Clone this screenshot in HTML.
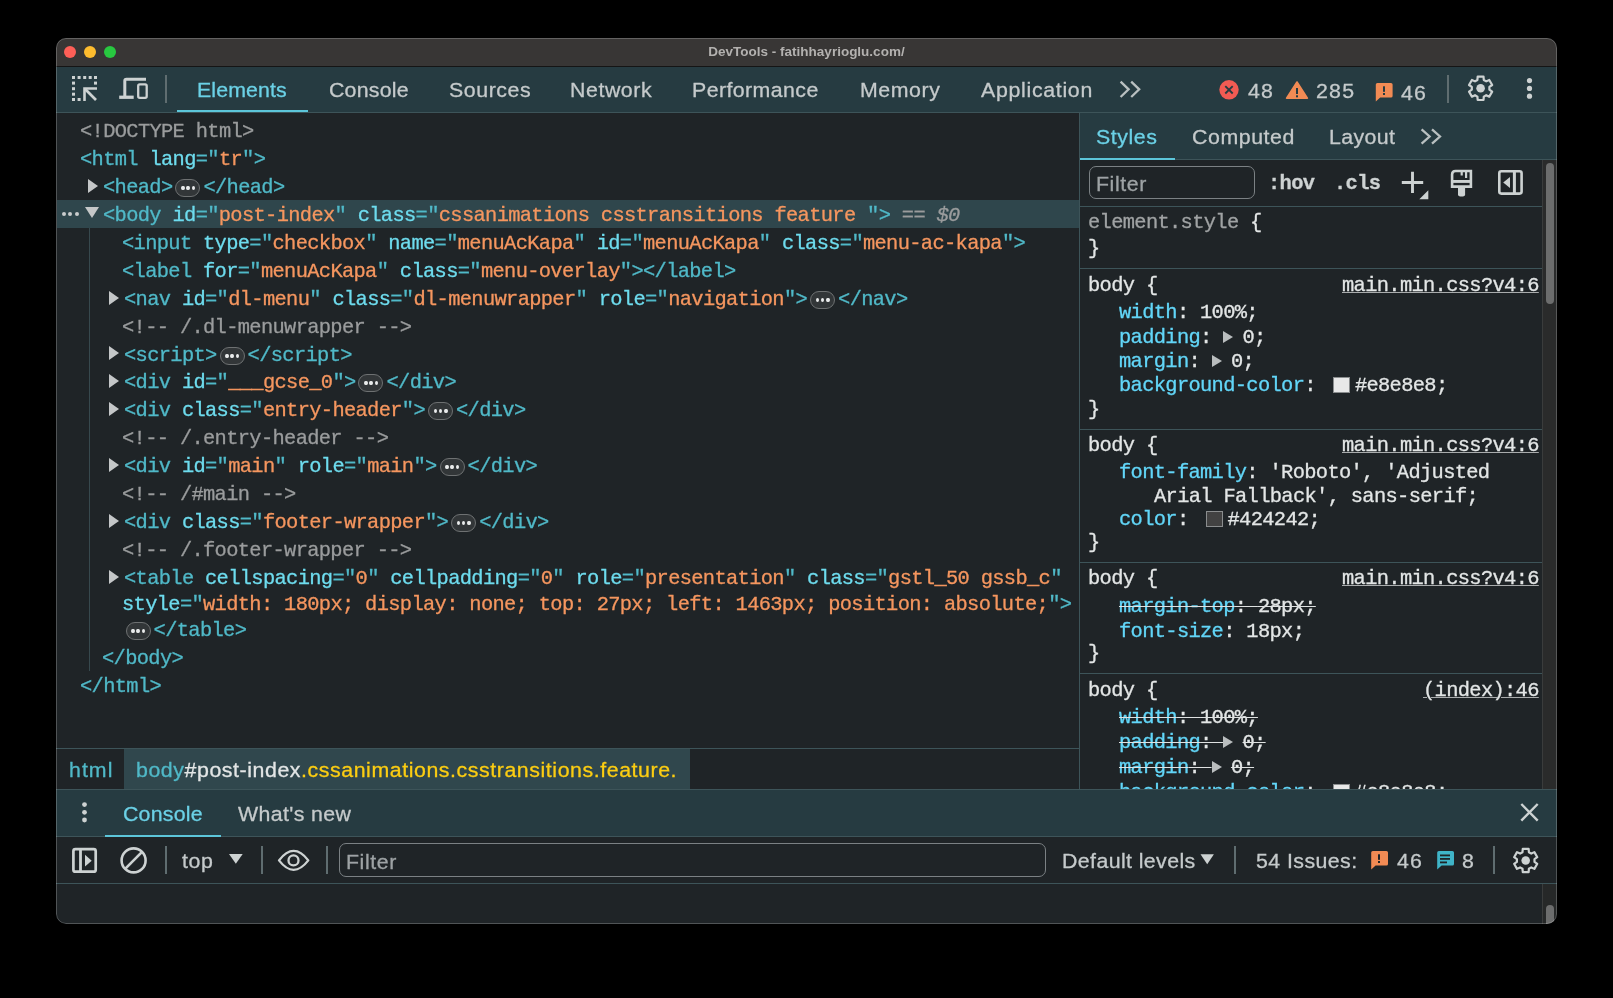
<!DOCTYPE html>
<html><head><meta charset="utf-8">
<style>
*{box-sizing:border-box;margin:0;padding:0}
html,body{width:1613px;height:998px;background:#000;overflow:hidden}
body{position:relative;font-family:"Liberation Sans",sans-serif}
.win{position:absolute;left:0;top:0;width:1613px;height:998px;clip-path:inset(38px 56px 74px 56px round 10px);background:#1f2427}
.a{position:absolute}
.row,.tab,.ui,.title{will-change:transform}
svg{position:absolute;overflow:visible}
.titlebar{left:56px;top:38px;width:1501px;height:29px;background:#383635}
.title{left:56px;top:44px;width:1501px;text-align:center;font-weight:bold;font-size:13.5px;color:#b3b1af;letter-spacing:0}
.light{width:12px;height:12px;border-radius:50%;top:46px}
.bar{background:#263b41}
.hl{position:absolute;height:1px;background:#3d5459}
.vl{position:absolute;width:1px;background:#3d5459}
.tab{position:absolute;font-size:20.5px;color:#c5cacb;white-space:nowrap;line-height:24px;letter-spacing:0.55px;transform:scaleX(1.04);transform-origin:0 0;-webkit-text-stroke:0.3px currentColor}
.tab.act{color:#6bd1e6}
.uline{position:absolute;height:2px;background:#5cc6da}
.row{position:absolute;white-space:pre;font-family:"Liberation Mono",monospace;font-size:20.4px;letter-spacing:-0.66px;line-height:26px;-webkit-text-stroke:0.3px currentColor}
.t{color:#50b9c8}
.an{color:#6edcee}
.av{color:#f5965f}
.cm{color:#9a9c9d}
.cm i{font-style:italic}
.pn{color:#62d6f8}
.pv{color:#e3e6e6}
.sel{color:#e3e6e6}
.es{color:#a0a3a4}
.strike{text-decoration:line-through;text-decoration-color:#dfe2e2;text-decoration-thickness:1.3px}
.link{color:#e3e6e6;text-decoration:underline;text-decoration-thickness:1px;text-underline-offset:1px;text-decoration-color:#a9acad}
.bdg{display:inline-block;position:relative;width:25px;height:18px;border:1px solid #6e7172;background:#323638;border-radius:9px;margin:0 3.1px 0 2.9px;vertical-align:-4px;letter-spacing:0;-webkit-text-stroke:0}
.bdg i{position:absolute;top:5.9px;width:3.4px;height:4.3px;border-radius:50%;background:#e9ebeb}
.bdg i:nth-child(1){left:4.8px}.bdg i:nth-child(2){left:9.8px}.bdg i:nth-child(3){left:15.3px}
.dots3 i{position:absolute;top:0;width:4px;height:4px;border-radius:50%;background:#c9cccd}
.dots3 i:nth-child(1){left:0}.dots3 i:nth-child(2){left:6.5px}.dots3 i:nth-child(3){left:13px}
.tri-r{width:0;height:0;border-top:7px solid transparent;border-bottom:7px solid transparent;border-left:10.2px solid #c4c7c8}
.tri-d{width:0;height:0;border-left:7px solid transparent;border-right:7px solid transparent;border-top:11px solid #c4c7c8}
.tri-rs{width:0;height:0;border-top:6px solid transparent;border-bottom:6px solid transparent;border-left:10px solid #b9bdbe}
.sepv{position:absolute;width:1.5px;background:#5f6d70}
.ui{position:absolute;font-size:20.5px;white-space:nowrap;line-height:24px;letter-spacing:0.55px;transform:scaleX(1.04);transform-origin:0 0;color:#c5cacb;-webkit-text-stroke:0.3px currentColor}
.swatch{display:inline-block;width:16.5px;height:16.5px;border:1px solid #8a8d8e;vertical-align:-2px;margin:0 4px 0 2px;letter-spacing:0}
</style></head><body>
<div class="win">
  <!-- title bar -->
  <div class="a titlebar"></div>
  <div class="a light" style="left:64px;background:#fe5f57"></div>
  <div class="a light" style="left:84px;background:#febc2e"></div>
  <div class="a light" style="left:104px;background:#28c840"></div>
  <div class="a title">DevTools - fatihhayrioglu.com/</div>

  <!-- main toolbar -->
  <div class="a bar" style="left:56px;top:67px;width:1501px;height:45px"></div>
  <div class="a" style="left:56px;top:66px;width:1501px;height:1px;background:#151515"></div>
  <div class="hl" style="left:56px;top:112px;width:1501px"></div>
<div class="tab act" style="left:197.4px;top:78px;letter-spacing:0.11px">Elements</div>
<div class="tab" style="left:328.8px;top:78px;letter-spacing:0.21px">Console</div>
<div class="tab" style="left:449.3px;top:78px;letter-spacing:0.55px">Sources</div>
<div class="tab" style="left:570.3px;top:78px;letter-spacing:0.55px">Network</div>
<div class="tab" style="left:691.5px;top:78px;letter-spacing:0.41px">Performance</div>
<div class="tab" style="left:859.5px;top:78px;letter-spacing:0.55px">Memory</div>
<div class="tab" style="left:981.0px;top:78px;letter-spacing:0.67px">Application</div>
<div class="uline" style="left:177px;width:131px;top:110px"></div>
<div class="sepv" style="left:165px;top:75px;height:28px"></div>
<div class="sepv" style="left:1447px;top:75px;height:28px"></div>
<div class="ui" style="left:1247.6px;top:79px;letter-spacing:1.2px">48</div>
<div class="ui" style="left:1315.8px;top:79px;letter-spacing:1.2px">285</div>
<div class="ui" style="left:1401px;top:81px;letter-spacing:1.2px">46</div>

  <!-- elements panel -->
<div class="row" style="left:80.0px;top:119.3px"><span class="cm">&lt;!DOCTYPE html&gt;</span></div>
<div class="row" style="left:80.0px;top:147.2px"><span class="t">&lt;html</span> <span class="an">lang</span><span class="t">=&quot;</span><span class="av">tr</span><span class="t">&quot;</span><span class="t">&gt;</span></div>
<div class="a tri-r" style="left:87.8px;top:178.9px"></div>
<div class="row" style="left:103.4px;top:175.1px"><span class="t">&lt;head&gt;</span><span class="bdg"><i></i><i></i><i></i></span><span class="t">&lt;/head&gt;</span></div>
<div class="a" style="left:57px;top:200px;width:1022px;height:28px;background:#2f464c"></div>
<div class="a dots3" style="left:61.5px;top:211.6px"><i></i><i></i><i></i></div>
<div class="a tri-d" style="left:84.7px;top:207.3px"></div>
<div class="row" style="left:103.4px;top:203.0px"><span class="t">&lt;body</span> <span class="an">id</span><span class="t">=&quot;</span><span class="av">post-index</span><span class="t">&quot;</span> <span class="an">class</span><span class="t">=&quot;</span><span class="av">cssanimations csstransitions feature </span><span class="t">&quot;</span><span class="t">&gt;</span><span class="cm"> == <i>$0</i></span></div>
<div class="row" style="left:122.4px;top:230.9px"><span class="t">&lt;input</span> <span class="an">type</span><span class="t">=&quot;</span><span class="av">checkbox</span><span class="t">&quot;</span> <span class="an">name</span><span class="t">=&quot;</span><span class="av">menuAcKapa</span><span class="t">&quot;</span> <span class="an">id</span><span class="t">=&quot;</span><span class="av">menuAcKapa</span><span class="t">&quot;</span> <span class="an">class</span><span class="t">=&quot;</span><span class="av">menu-ac-kapa</span><span class="t">&quot;</span><span class="t">&gt;</span></div>
<div class="row" style="left:122.4px;top:258.8px"><span class="t">&lt;label</span> <span class="an">for</span><span class="t">=&quot;</span><span class="av">menuAcKapa</span><span class="t">&quot;</span> <span class="an">class</span><span class="t">=&quot;</span><span class="av">menu-overlay</span><span class="t">&quot;</span><span class="t">&gt;&lt;/label&gt;</span></div>
<div class="a tri-r" style="left:108.6px;top:290.5px"></div>
<div class="row" style="left:124.2px;top:286.7px"><span class="t">&lt;nav</span> <span class="an">id</span><span class="t">=&quot;</span><span class="av">dl-menu</span><span class="t">&quot;</span> <span class="an">class</span><span class="t">=&quot;</span><span class="av">dl-menuwrapper</span><span class="t">&quot;</span> <span class="an">role</span><span class="t">=&quot;</span><span class="av">navigation</span><span class="t">&quot;</span><span class="t">&gt;</span><span class="bdg"><i></i><i></i><i></i></span><span class="t">&lt;/nav&gt;</span></div>
<div class="row" style="left:122.4px;top:314.6px"><span class="cm">&lt;!-- /.dl-menuwrapper --&gt;</span></div>
<div class="a tri-r" style="left:108.6px;top:346.3px"></div>
<div class="row" style="left:124.2px;top:342.5px"><span class="t">&lt;script&gt;</span><span class="bdg"><i></i><i></i><i></i></span><span class="t">&lt;/script&gt;</span></div>
<div class="a tri-r" style="left:108.6px;top:374.2px"></div>
<div class="row" style="left:124.2px;top:370.4px"><span class="t">&lt;div</span> <span class="an">id</span><span class="t">=&quot;</span><span class="av">___gcse_0</span><span class="t">&quot;</span><span class="t">&gt;</span><span class="bdg"><i></i><i></i><i></i></span><span class="t">&lt;/div&gt;</span></div>
<div class="a tri-r" style="left:108.6px;top:402.1px"></div>
<div class="row" style="left:124.2px;top:398.3px"><span class="t">&lt;div</span> <span class="an">class</span><span class="t">=&quot;</span><span class="av">entry-header</span><span class="t">&quot;</span><span class="t">&gt;</span><span class="bdg"><i></i><i></i><i></i></span><span class="t">&lt;/div&gt;</span></div>
<div class="row" style="left:122.4px;top:426.2px"><span class="cm">&lt;!-- /.entry-header --&gt;</span></div>
<div class="a tri-r" style="left:108.6px;top:457.9px"></div>
<div class="row" style="left:124.2px;top:454.1px"><span class="t">&lt;div</span> <span class="an">id</span><span class="t">=&quot;</span><span class="av">main</span><span class="t">&quot;</span> <span class="an">role</span><span class="t">=&quot;</span><span class="av">main</span><span class="t">&quot;</span><span class="t">&gt;</span><span class="bdg"><i></i><i></i><i></i></span><span class="t">&lt;/div&gt;</span></div>
<div class="row" style="left:122.4px;top:482.0px"><span class="cm">&lt;!-- /#main --&gt;</span></div>
<div class="a tri-r" style="left:108.6px;top:513.7px"></div>
<div class="row" style="left:124.2px;top:509.9px"><span class="t">&lt;div</span> <span class="an">class</span><span class="t">=&quot;</span><span class="av">footer-wrapper</span><span class="t">&quot;</span><span class="t">&gt;</span><span class="bdg"><i></i><i></i><i></i></span><span class="t">&lt;/div&gt;</span></div>
<div class="row" style="left:122.4px;top:537.8px"><span class="cm">&lt;!-- /.footer-wrapper --&gt;</span></div>
<div class="a tri-r" style="left:108.6px;top:569.5px"></div>
<div class="row" style="left:124.2px;top:565.7px"><span class="t">&lt;table</span> <span class="an">cellspacing</span><span class="t">=&quot;</span><span class="av">0</span><span class="t">&quot;</span> <span class="an">cellpadding</span><span class="t">=&quot;</span><span class="av">0</span><span class="t">&quot;</span> <span class="an">role</span><span class="t">=&quot;</span><span class="av">presentation</span><span class="t">&quot;</span> <span class="an">class</span><span class="t">=&quot;</span><span class="av">gstl_50 gssb_c</span><span class="t">&quot;</span></div>
<div class="row" style="left:122.4px;top:592.0px"><span class="an">style</span><span class="t">=&quot;</span><span class="av">width: 180px; display: none; top: 27px; left: 1463px; position: absolute;</span><span class="t">&quot;&gt;</span></div>
<div class="row" style="left:122.4px;top:618.3px"><span class="bdg" style="margin-left:3.5px"><i></i><i></i><i></i></span><span class="t">&lt;/table&gt;</span></div>
<div class="row" style="left:101.6px;top:646.4px"><span class="t">&lt;/body&gt;</span></div>
<div class="row" style="left:80.0px;top:673.7px"><span class="t">&lt;/html&gt;</span></div>
<div class="a" style="left:89px;top:228px;width:1px;height:443px;background:#37494e"></div>

  <!-- divider -->
  <div class="vl" style="left:1079px;top:112px;height:677px"></div>

  <!-- styles sidebar -->
  <div class="a bar" style="left:1080px;top:113px;width:477px;height:46px"></div>
  <div class="hl" style="left:1080px;top:159px;width:477px"></div>
<div class="tab act" style="left:1096px;top:125px">Styles</div>
<div class="tab" style="left:1192px;top:125px">Computed</div>
<div class="tab" style="left:1329.4px;top:125px;letter-spacing:0.36px">Layout</div>
<div class="uline" style="left:1080px;width:95px;top:158px"></div>
<div class="a" style="left:1089px;top:166px;width:166px;height:33px;border:1px solid #7b8184;border-radius:7px"></div>
<div class="ui" style="left:1096px;top:172px;color:#9ea3a5">Filter</div>
<div class="row" style="left:1268px;top:171.4px;font-weight:bold;color:#cdd2d2">:hov</div>
<div class="row" style="left:1333.5px;top:171.4px;font-weight:bold;color:#cdd2d2">.cls</div>
<div class="hl" style="left:1080px;top:206px;width:462px"></div>
<div class="hl" style="left:1080px;top:268px;width:462px"></div>
<div class="hl" style="left:1080px;top:429px;width:462px"></div>
<div class="hl" style="left:1080px;top:562px;width:462px"></div>
<div class="hl" style="left:1080px;top:673px;width:462px"></div>
<div class="a" style="left:1542px;top:160px;width:15px;height:629px;background:#2a2b2b;border-left:1px solid #3a3c3c"></div>
<div class="a" style="left:1546px;top:163px;width:8px;height:141px;background:#6c6d6d;border-radius:4px"></div>
<div class="row" style="left:1087.6px;top:209.9px"><span class="es">element.style</span><span class="sel"> {</span></div>
<div class="row" style="left:1087.6px;top:236.0px"><span class="sel">}</span></div>
<div class="row" style="left:1087.6px;top:272.8px"><span class="sel">body {</span></div>
<div class="row" style="left:1341.6px;top:272.8px"><span class="link">main.min.css?v4:6</span></div>
<div class="row" style="left:1118.8px;top:300.1px"><span class="pn">width</span><span class="pv">: </span><span class="pv">100%;</span></div>
<div class="row" style="left:1118.8px;top:324.9px"><span class="pn">padding</span><span class="pv">: </span><span style="display:inline-block;position:relative;width:19.3px;height:10px;letter-spacing:0"><span class="a tri-rs" style="left:0;top:-2px"></span></span><span class="pv">0;</span></div>
<div class="row" style="left:1118.8px;top:349.3px"><span class="pn">margin</span><span class="pv">: </span><span style="display:inline-block;position:relative;width:19.3px;height:10px;letter-spacing:0"><span class="a tri-rs" style="left:0;top:-2px"></span></span><span class="pv">0;</span></div>
<div class="row" style="left:1118.8px;top:373.3px"><span class="pn">background-color</span><span class="pv">: </span><span class="swatch" style="background:#e8e8e8;margin:0 5px 0 6px"></span><span class="pv">#e8e8e8;</span></div>
<div class="row" style="left:1087.6px;top:396.5px"><span class="sel">}</span></div>
<div class="row" style="left:1087.6px;top:432.6px"><span class="sel">body {</span></div>
<div class="row" style="left:1341.6px;top:432.6px"><span class="link">main.min.css?v4:6</span></div>
<div class="row" style="left:1118.8px;top:459.9px"><span class="pn">font-family</span><span class="pv">: </span><span class="pv">&#x27;Roboto&#x27;, &#x27;Adjusted</span></div>
<div class="row" style="left:1154.4px;top:483.6px"><span class="pv">Arial Fallback&#x27;, sans-serif;</span></div>
<div class="row" style="left:1118.8px;top:506.7px"><span class="pn">color</span><span class="pv">: </span><span class="swatch" style="background:#424242;margin:0 5px 0 6px"></span><span class="pv">#424242;</span></div>
<div class="row" style="left:1087.6px;top:530.0px"><span class="sel">}</span></div>
<div class="row" style="left:1087.6px;top:565.9px"><span class="sel">body {</span></div>
<div class="row" style="left:1341.6px;top:565.9px"><span class="link">main.min.css?v4:6</span></div>
<div class="row" style="left:1118.8px;top:593.6px"><span class="strike"><span class="pn">margin-top</span><span class="pv">: </span><span class="pv">28px;</span></span></div>
<div class="row" style="left:1118.8px;top:618.6px"><span class="pn">font-size</span><span class="pv">: </span><span class="pv">18px;</span></div>
<div class="row" style="left:1087.6px;top:640.5px"><span class="sel">}</span></div>
<div class="row" style="left:1087.6px;top:678.4px"><span class="sel">body {</span></div>
<div class="row" style="left:1422.7px;top:678.4px"><span class="link">(index):46</span></div>
<div class="a" style="left:1080px;top:700px;width:462px;height:89px;overflow:hidden">
<div class="row" style="left:38.8px;top:5.3px"><span class="strike"><span class="pn">width</span><span class="pv">: </span><span class="pv">100%;</span></span></div>
<div class="row" style="left:38.8px;top:29.9px"><span class="strike"><span class="pn">padding</span><span class="pv">: </span><span style="display:inline-block;position:relative;width:19.3px;height:10px;letter-spacing:0"><span class="a tri-rs" style="left:0;top:-2px"></span></span><span class="pv">0;</span></span></div>
<div class="row" style="left:38.8px;top:54.9px"><span class="strike"><span class="pn">margin</span><span class="pv">: </span><span style="display:inline-block;position:relative;width:19.3px;height:10px;letter-spacing:0"><span class="a tri-rs" style="left:0;top:-2px"></span></span><span class="pv">0;</span></span></div>
<div class="row" style="left:38.8px;top:79.5px"><span class="strike"><span class="pn">background-color</span><span class="pv">: </span><span class="swatch" style="background:#e8e8e8;margin:0 5px 0 6px"></span><span class="pv">#e8e8e8;</span></span></div>
</div>

  <!-- breadcrumbs -->
  <div class="hl" style="left:56px;top:748px;width:1023px"></div>
  <div class="a" style="left:124px;top:749px;width:566px;height:40px;background:#30474d"></div>
<div class="ui" style="left:69px;top:757.6px;color:#50b9c8;letter-spacing:1px">html</div>
<div class="ui" style="left:136.3px;top:757.6px"><span style="color:#50b9c8">body</span><span style="color:#e3e6e6">#post-index</span><span style="color:#fccd12">.cssanimations.csstransitions.feature.</span></div>

  <!-- drawer -->
  <div class="a bar" style="left:56px;top:789px;width:1501px;height:47px"></div>
  <div class="hl" style="left:56px;top:789px;width:1501px"></div>
  <div class="hl" style="left:56px;top:836px;width:1501px"></div>
  <div class="hl" style="left:56px;top:883px;width:1501px"></div>
<div class="tab act" style="left:122.6px;top:801.6px;letter-spacing:0.21px">Console</div>
<div class="tab" style="left:238.4px;top:801.6px;letter-spacing:0.37px">What's new</div>
<div class="uline" style="left:105px;width:116px;top:835px"></div>
<div class="sepv" style="left:165px;top:846px;height:28px;"></div>
<div class="sepv" style="left:261px;top:846px;height:28px;"></div>
<div class="sepv" style="left:326px;top:846px;height:28px;"></div>
<div class="sepv" style="left:1234px;top:846px;height:28px;"></div>
<div class="sepv" style="left:1493px;top:846px;height:28px;"></div>
<div class="ui" style="left:182px;top:849px">top</div>
<div class="a" style="left:339px;top:843px;width:707px;height:34px;border:1px solid #7b8184;border-radius:7px"></div>
<div class="ui" style="left:346px;top:849.5px;color:#9ea3a5">Filter</div>
<div class="ui" style="left:1062.2px;top:848.6px;letter-spacing:0.39px">Default levels</div>
<div class="ui" style="left:1256px;top:848.6px;letter-spacing:0.42px">54 Issues:</div>
<div class="ui" style="left:1396.7px;top:848.6px;letter-spacing:1px">46</div>
<div class="ui" style="left:1461.5px;top:848.6px">8</div>
<div class="a" style="left:1542px;top:884px;width:15px;height:40px;background:#262828;border-left:1px solid #3a3c3c"></div>
<div class="a" style="left:1546px;top:905px;width:8px;height:30px;background:#6c6d6d;border-radius:4px"></div>
<svg style="left:0;top:0" width="1613" height="998" viewBox="0 0 1613 998"><rect x="72.0" y="76.0" width="3" height="3" fill="#cdd2d2"/><rect x="77.6" y="76.0" width="3" height="3" fill="#cdd2d2"/><rect x="83.2" y="76.0" width="3" height="3" fill="#cdd2d2"/><rect x="88.7" y="76.0" width="3" height="3" fill="#cdd2d2"/><rect x="94.0" y="76.0" width="3" height="3" fill="#cdd2d2"/><rect x="72.0" y="81.6" width="3" height="3" fill="#cdd2d2"/><rect x="72.0" y="87.2" width="3" height="3" fill="#cdd2d2"/><rect x="72.0" y="92.7" width="3" height="3" fill="#cdd2d2"/><rect x="72.0" y="98.0" width="3" height="3" fill="#cdd2d2"/><rect x="94.0" y="81.6" width="3" height="3" fill="#cdd2d2"/><rect x="77.6" y="98.0" width="3" height="3" fill="#cdd2d2"/><path d="M83.2 87.2H97V89.8H85.8V101H83.2Z" fill="#cdd2d2"/><line x1="84.8" y1="88.8" x2="96" y2="100" stroke="#cdd2d2" stroke-width="2.7"/><path d="M123.3 96.7V80.9Q123.3 77.7 126.5 77.7H146V80.7H126.3V96.7Z" fill="#cdd2d2"/><rect x="119.2" y="95.6" width="14.5" height="3.3" fill="#cdd2d2"/><rect x="138.2" y="84.4" width="8.5" height="13.4" rx="1.5" fill="none" stroke="#cdd2d2" stroke-width="2.3"/><path d="M1120.6 81.6L1128.6 89.3L1120.6 97M1131.2 81.6L1139.2 89.3L1131.2 97" fill="none" stroke="#b9c0c1" stroke-width="2.3"/><circle cx="1229" cy="89.8" r="9.7" fill="#f25b53"/><path d="M1225.3 86.1L1232.7 93.5M1232.7 86.1L1225.3 93.5" stroke="#263b41" stroke-width="1.9"/><path d="M1297 82L1307.4 98.2H1286.6Z" fill="#f28b54" stroke="#f28b54" stroke-width="1.6" stroke-linejoin="round"/><rect x="1296" y="88" width="2" height="6" fill="#263b41"/><rect x="1296" y="95.3" width="2" height="2" fill="#263b41"/><path d="M1376.2 83.0h14.8q1.6 0 1.6 1.6v11.4q0 1.6-1.6 1.6h-10.8l-4.4 3.9v-16.9q0-1.6 1.6-1.6z" fill="#f28b54"/><rect x="1383" y="86.3" width="2" height="5.5" fill="#263b41"/><rect x="1383" y="93" width="2" height="2" fill="#263b41"/><path d="M1477.41 79.99 L1477.68 76.61 L1483.52 76.61 L1483.79 79.99 L1486.20 81.38 L1489.27 79.93 L1492.18 84.98 L1489.39 86.91 L1489.39 89.69 L1492.18 91.62 L1489.27 96.67 L1486.20 95.22 L1483.79 96.61 L1483.52 99.99 L1477.68 99.99 L1477.41 96.61 L1475.00 95.22 L1471.93 96.67 L1469.02 91.62 L1471.81 89.69 L1471.81 86.91 L1469.02 84.98 L1471.93 79.93 L1475.00 81.38Z" fill="none" stroke="#cdd2d2" stroke-width="2.2" stroke-linejoin="round"/><circle cx="1480.60" cy="88.30" r="4.3" fill="#cdd2d2"/><circle cx="1529.5" cy="80.6" r="2.6" fill="#cdd2d2"/><circle cx="1529.5" cy="88.4" r="2.6" fill="#cdd2d2"/><circle cx="1529.5" cy="96.2" r="2.6" fill="#cdd2d2"/><path d="M1421.6 129.3L1429.6 136.5L1421.6 143.7M1432 129.3L1440 136.5L1432 143.7" fill="none" stroke="#b9c0c1" stroke-width="2.3"/><path d="M1412.5 171.8V192.9M1401.8 182.5H1423.2" stroke="#cdd2d2" stroke-width="2.9"/><path d="M1428.3 190.2V199.2H1419.3Z" fill="#cdd2d2"/><path d="M1452.1 186.6V174.5Q1452.1 171 1455.6 171H1470.9V186.6Z" fill="none" stroke="#cdd2d2" stroke-width="2.6"/><rect x="1452" y="180" width="19" height="2.9" fill="#cdd2d2"/><rect x="1460.6" y="172" width="2.2" height="3.5" fill="#cdd2d2"/><rect x="1465" y="172" width="2.2" height="6" fill="#cdd2d2"/><path d="M1458 187H1465.1V194.6Q1465.1 196.6 1461.55 196.6Q1458 196.6 1458 194.6Z" fill="#cdd2d2"/><rect x="1499.3" y="171.3" width="22.3" height="22.3" rx="2" fill="none" stroke="#cdd2d2" stroke-width="2.6"/><rect x="1512.9" y="171" width="3" height="23" fill="#cdd2d2"/><path d="M1510 176.9V188L1503.2 182.45Z" fill="#cdd2d2"/><circle cx="84.5" cy="804.6" r="2.4" fill="#cdd2d2"/><circle cx="84.5" cy="812.3" r="2.4" fill="#cdd2d2"/><circle cx="84.5" cy="820.0" r="2.4" fill="#cdd2d2"/><path d="M1521.3 804L1537.7 820.6M1537.7 804L1521.3 820.6" stroke="#cdd2d2" stroke-width="2.4"/><rect x="73.4" y="849.2" width="22.3" height="22.5" rx="2" fill="none" stroke="#cdd2d2" stroke-width="2.7"/><rect x="79.1" y="849" width="2.8" height="23" fill="#cdd2d2"/><path d="M85 854.8V866.6L91.7 860.7Z" fill="#cdd2d2"/><circle cx="133.6" cy="860.4" r="12" fill="none" stroke="#cdd2d2" stroke-width="2.6"/><line x1="141.8" y1="852.2" x2="125.4" y2="868.6" stroke="#cdd2d2" stroke-width="2.6"/><path d="M229 854H242.7L235.85 863.7Z" fill="#cdd2d2"/><path d="M279 860.4Q293.6 841.5 308.3 860.4Q293.6 879.3 279 860.4Z" fill="none" stroke="#cdd2d2" stroke-width="2.3" stroke-linejoin="round"/><circle cx="293.5" cy="860.4" r="5" fill="none" stroke="#cdd2d2" stroke-width="2.3"/><path d="M1200.5 854.2H1213.9L1207.2 864.2Z" fill="#cdd2d2"/><path d="M1371.6 851.0h14.8q1.6 0 1.6 1.6v11.4q0 1.6-1.6 1.6h-10.8l-4.4 3.9v-16.9q0-1.6 1.6-1.6z" fill="#f28b54"/><rect x="1378" y="854.3" width="2" height="5.5" fill="#1f2427"/><rect x="1378" y="861" width="2" height="2" fill="#1f2427"/><path d="M1437.6 851.0h14.8q1.6 0 1.6 1.6v11.4q0 1.6-1.6 1.6h-10.8l-4.4 3.9v-16.9q0-1.6 1.6-1.6z" fill="#3fb4c8"/><rect x="1440" y="854.5" width="10" height="1.8" fill="#1f2427"/><rect x="1440" y="858" width="10" height="1.8" fill="#1f2427"/><rect x="1440" y="861.5" width="7" height="1.8" fill="#1f2427"/><path d="M1522.51 852.19 L1522.78 848.81 L1528.62 848.81 L1528.89 852.19 L1531.30 853.58 L1534.37 852.13 L1537.28 857.18 L1534.49 859.11 L1534.49 861.89 L1537.28 863.82 L1534.37 868.87 L1531.30 867.42 L1528.89 868.81 L1528.62 872.19 L1522.78 872.19 L1522.51 868.81 L1520.10 867.42 L1517.03 868.87 L1514.12 863.82 L1516.91 861.89 L1516.91 859.11 L1514.12 857.18 L1517.03 852.13 L1520.10 853.58Z" fill="none" stroke="#cdd2d2" stroke-width="2.2" stroke-linejoin="round"/><circle cx="1525.70" cy="860.50" r="4.3" fill="#cdd2d2"/></svg>

  <!-- window outline -->
  <div class="a" style="left:56px;top:38px;width:1501px;height:886px;border:1px solid rgba(255,255,255,0.22);border-radius:10px"></div>
</div>
</body></html>
